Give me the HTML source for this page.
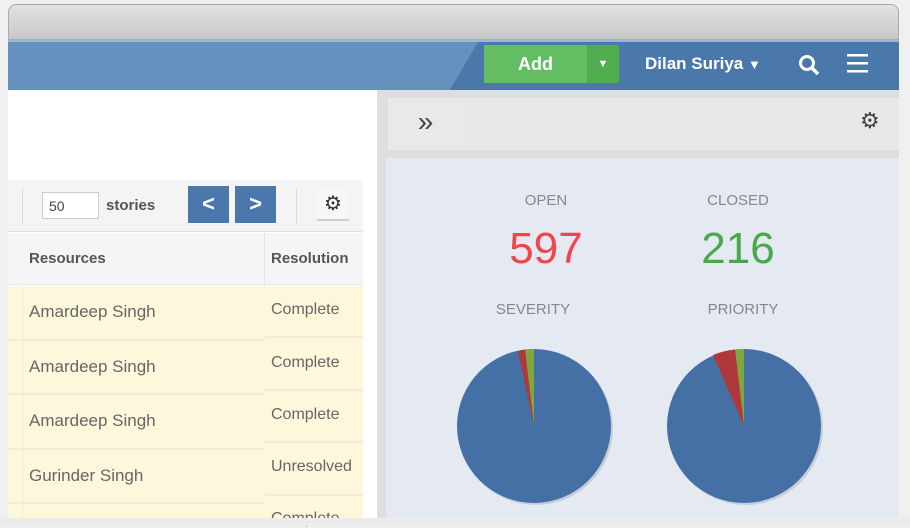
<!DOCTYPE html>
<html><head><style>
*{margin:0;padding:0;box-sizing:border-box}
body{width:910px;height:526px;overflow:hidden;background:#f0f0f0;font-family:"Liberation Sans",sans-serif;position:relative}
.a{position:absolute}
</style></head><body>
<div class="a" style="left:8px;top:4px;width:891px;height:36px;border-radius:8px 8px 0 0;background:linear-gradient(#e2e2e2,#c8c8c8);border:1px solid #aaa"></div>
<div class="a" style="left:8px;top:40px;width:891px;height:50px;background:#4b78aa;border-top:2px solid #9ab7d6"></div>
<div class="a" style="left:8px;top:42px;width:470px;height:48px;background:#6491bd;clip-path:polygon(0 0,100% 0,94% 100%,0 100%)"></div>
<div class="a" style="left:484px;top:45px;width:103px;height:38px;background:#63bd63;color:#fff;font-size:18px;font-weight:bold;text-align:center;line-height:38px">Add</div>
<div class="a" style="left:587px;top:45px;width:32px;height:38px;background:#4fad4f;color:#fff;font-size:11px;text-align:center;line-height:38px">▼</div>
<div class="a" style="left:645px;top:54px;color:#fff;font-size:17px;font-weight:bold">Dilan Suriya <span style="font-size:13px">▼</span></div>
<svg class="a" style="left:797px;top:53px" width="26" height="24"><circle cx="10" cy="10" r="6.5" stroke="#fff" stroke-width="3" fill="none"/><line x1="15" y1="15" x2="21" y2="21" stroke="#fff" stroke-width="3.5"/></svg>
<svg class="a" style="left:846px;top:52px" width="24" height="24"><rect x="1" y="2" width="21" height="2.5" fill="#fff"/><rect x="1" y="10" width="21" height="2.5" fill="#fff"/><rect x="1" y="18" width="21" height="2.5" fill="#fff"/></svg>
<div class="a" style="left:8px;top:90px;width:369px;height:428px;background:#fff"></div>
<div class="a" style="left:8px;top:180px;width:355px;height:52px;background:#f4f4f4;border-bottom:1px solid #e0e0e0"></div>
<div class="a" style="left:22px;top:188px;width:1px;height:36px;background:#ddd"></div>
<div class="a" style="left:42px;top:192px;width:57px;height:27px;background:#fff;border:1px solid #ccc;font-size:14px;color:#444;padding:5px 6px">50</div>
<div class="a" style="left:106px;top:197px;font-size:15px;font-weight:bold;color:#555">stories</div>
<div class="a" style="left:188px;top:186px;width:41px;height:37px;background:#4a78ad;color:#fff;font-size:22px;font-weight:bold;text-align:center;line-height:35px">&lt;</div>
<div class="a" style="left:235px;top:186px;width:41px;height:37px;background:#4a78ad;color:#fff;font-size:22px;font-weight:bold;text-align:center;line-height:35px">&gt;</div>
<div class="a" style="left:296px;top:188px;width:1px;height:36px;background:#ddd"></div>
<div class="a" style="left:317px;top:189px;width:32px;height:32px;background:#f7f7f7;border-bottom:2px solid #ccc;text-align:center;line-height:30px;font-size:20px;color:#333">⚙</div>
<div class="a" style="left:8px;top:233px;width:355px;height:52px;background:#f5f5f5;border-bottom:1px solid #e6e6e6"></div>
<div class="a" style="left:264px;top:233px;width:1px;height:285px;background:#e3e3e3"></div>
<div class="a" style="left:29px;top:250px;font-size:15px;font-weight:bold;color:#555">Resources</div>
<div class="a" style="left:271px;top:250px;font-size:15px;font-weight:bold;color:#555">Resolution</div>
<div class="a" style="left:8px;top:286px;width:355px;height:232px;background:#fdf7dc"></div>
<div class="a" style="left:8px;top:339px;width:256px;height:2px;background:#f1ecd6"></div>
<div class="a" style="left:8px;top:393px;width:256px;height:2px;background:#f1ecd6"></div>
<div class="a" style="left:8px;top:448px;width:256px;height:2px;background:#f1ecd6"></div>
<div class="a" style="left:8px;top:502px;width:256px;height:2px;background:#f1ecd6"></div>
<div class="a" style="left:265px;top:336px;width:98px;height:2px;background:#f1ecd6"></div>
<div class="a" style="left:265px;top:389px;width:98px;height:2px;background:#f1ecd6"></div>
<div class="a" style="left:265px;top:441px;width:98px;height:2px;background:#f1ecd6"></div>
<div class="a" style="left:265px;top:494px;width:98px;height:2px;background:#f1ecd6"></div>
<div class="a" style="left:22px;top:286px;width:1px;height:232px;background:#efe9d0"></div>
<div class="a" style="left:29px;top:302px;font-size:17px;color:#666">Amardeep Singh</div>
<div class="a" style="left:29px;top:357px;font-size:17px;color:#666">Amardeep Singh</div>
<div class="a" style="left:29px;top:411px;font-size:17px;color:#666">Amardeep Singh</div>
<div class="a" style="left:29px;top:466px;font-size:17px;color:#666">Gurinder Singh</div>
<div class="a" style="left:271px;top:301px;font-size:16px;color:#666">Complete</div>
<div class="a" style="left:271px;top:354px;font-size:16px;color:#666">Complete</div>
<div class="a" style="left:271px;top:406px;font-size:16px;color:#666">Complete</div>
<div class="a" style="left:271px;top:458px;font-size:16px;color:#666">Unresolved</div>
<div class="a" style="left:271px;top:510px;font-size:16px;color:#666">Complete</div>
<div class="a" style="left:363px;top:180px;width:14px;height:338px;background:#fff"></div>
<div class="a" style="left:377px;top:90px;width:522px;height:428px;background:#dedede"></div>
<div class="a" style="left:388px;top:98px;width:75px;height:52px;background:#e9e9e9;color:#444;font-size:28px;text-align:center;line-height:48px">»</div>
<div class="a" style="left:463px;top:98px;width:436px;height:52px;background:#e8e8e8"></div>
<div class="a" style="left:860px;top:108px;font-size:22px;color:#444">⚙</div>
<div class="a" style="left:386px;top:158px;width:513px;height:360px;background:#e4e9f2"></div>
<div class="a" style="left:486px;top:192px;width:120px;text-align:center;font-size:15px;color:#888">OPEN</div>
<div class="a" style="left:678px;top:192px;width:120px;text-align:center;font-size:15px;color:#888">CLOSED</div>
<div class="a" style="left:486px;top:224px;width:120px;text-align:center;font-size:44px;color:#f0454a">597</div>
<div class="a" style="left:678px;top:224px;width:120px;text-align:center;font-size:44px;color:#48a94a">216</div>
<div class="a" style="left:473px;top:301px;width:120px;text-align:center;font-size:15px;color:#888">SEVERITY</div>
<div class="a" style="left:683px;top:301px;width:120px;text-align:center;font-size:15px;color:#888">PRIORITY</div>
<svg class="a" style="left:452px;top:342px" width="170" height="170"><circle cx="84" cy="86" r="77" fill="#c9ced6"/><circle cx="82" cy="84" r="77" fill="#4570a6"/><path d="M82 84 L82 7 A77 77 0 0 0 73 7.5Z" fill="#7fa83c"/><path d="M82 84 L73 7.5 A77 77 0 0 0 66 9Z" fill="#b0383a"/></svg>
<svg class="a" style="left:662px;top:342px" width="170" height="170"><circle cx="84" cy="86" r="77" fill="#c9ced6"/><circle cx="82" cy="84" r="77" fill="#4570a6"/><path d="M82 84 L82 7 A77 77 0 0 0 73 7.5Z" fill="#7fa83c"/><path d="M82 84 L73 7.5 A77 77 0 0 0 51 13Z" fill="#b0383a"/></svg>
<div class="a" style="left:0;top:518px;width:910px;height:8px;background:#ececec"></div>
</body></html>
